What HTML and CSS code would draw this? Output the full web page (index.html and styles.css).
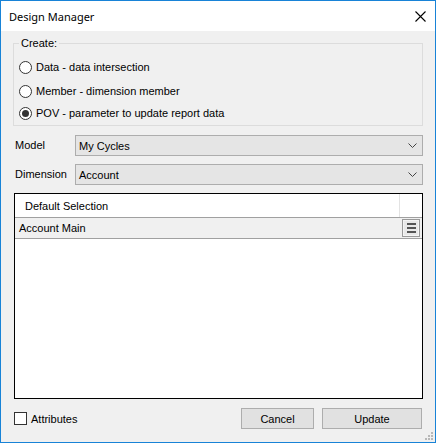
FILE: index.html
```html
<!DOCTYPE html>
<html>
<head>
<meta charset="utf-8">
<link rel="stylesheet" href="styles.css">
</head>
<body>
<div class="window">
  <div class="titlebar">
    <span class="title">Design Manager</span>
    <svg class="close" width="11" height="11" viewBox="0 0 11 11"><path d="M0.5 0.5 L10.5 10.5 M10.5 0.5 L0.5 10.5" stroke="#000" stroke-width="1.1" fill="none"/></svg>
  </div>
  <div class="content">
    <fieldset class="group">
      <legend>Create:</legend>
      <div class="radio-row"><span class="radio"></span><span>Data - data intersection</span></div>
      <div class="radio-row gap"><span class="radio"></span><span>Member - dimension member</span></div>
      <div class="radio-row"><span class="radio checked"></span><span>POV - parameter to update report data</span></div>
    </fieldset>
    <div class="field-row first">
      <span class="label">Model</span>
      <div class="combo"><span>My Cycles</span><svg width="9" height="6" viewBox="0 0 9 6"><path d="M0.5 0.5 L4.5 4.5 L8.5 0.5" stroke="#444" fill="none"/></svg></div>
    </div>
    <div class="field-row">
      <span class="label">Dimension</span>
      <div class="combo"><span>Account</span><svg width="9" height="6" viewBox="0 0 9 6"><path d="M0.5 0.5 L4.5 4.5 L8.5 0.5" stroke="#444" fill="none"/></svg></div>
    </div>
    <div class="grid">
      <div class="grid-head">
        <div class="head-cell">Default Selection</div>
        <div class="head-extra"></div>
      </div>
      <div class="grid-row">
        <span>Account Main</span>
        <div class="menu-btn"><svg width="9" height="10" viewBox="0 0 9 10"><rect x="0" y="0" width="9" height="2" fill="#555"/><rect x="0" y="4" width="9" height="2" fill="#555"/><rect x="0" y="8" width="9" height="2" fill="#555"/></svg></div>
      </div>
    </div>
    <div class="footer">
      <label class="check"><span class="box"></span><span>Attributes</span></label>
      <div class="buttons">
        <div class="btn cancel">Cancel</div>
        <div class="btn update">Update</div>
      </div>
    </div>
  </div>
  <svg class="grip" width="10" height="10" viewBox="0 0 10 10">
    <rect x="7" y="1" width="2" height="2" fill="#b8b8b8"/>
    <rect x="4" y="4" width="2" height="2" fill="#b8b8b8"/>
    <rect x="7" y="4" width="2" height="2" fill="#b8b8b8"/>
    <rect x="1" y="7" width="2" height="2" fill="#b8b8b8"/>
    <rect x="4" y="7" width="2" height="2" fill="#b8b8b8"/>
    <rect x="7" y="7" width="2" height="2" fill="#b8b8b8"/>
  </svg>
</div>
</body>
</html>
```
FILE: styles.css
```css
* { box-sizing: border-box; }
html, body { margin: 0; padding: 0; background: #fff; }
body { font-family: "Liberation Sans", Arial, sans-serif; font-size: 11px; color: #000; }

.window {
  position: relative;
  width: 436px;
  height: 443px;
  border: 1px solid #1883d7;
  background: #f0f0f0;
  display: flex;
  flex-direction: column;
}

.titlebar {
  height: 30px;
  background: #fff;
  display: flex;
  align-items: center;
  justify-content: space-between;
  padding-left: 8px;
  padding-right: 9px;
  flex: none;
}
.title { font-family: "Noto Sans", "Open Sans", sans-serif; font-size: 11px; color: #000; }
.close { display: block; margin-top: 0; }

.content {
  flex: 1;
  display: flex;
  flex-direction: column;
  padding: 6px 12px 13px 12px;
}

.group {
  margin: 0;
  padding: 6px 5px 1px 5px;
  border: 1px solid #dcdcdc;
  height: 89px;
  min-width: 0;
}
.group legend {
  padding: 0 2px;
  line-height: 13px;
  font-size: 11px;
}
.radio-row {
  height: 22px;
  display: flex;
  align-items: center;
}
.radio-row.gap { margin-top: 2px; }
.radio {
  width: 13px;
  height: 13px;
  border: 1px solid #333;
  border-radius: 50%;
  background: #fff;
  margin-right: 4px;
  display: flex;
  align-items: center;
  justify-content: center;
  flex: none;
}
.radio.checked::after {
  content: "";
  width: 7px;
  height: 7px;
  border-radius: 50%;
  background: #333;
}

.field-row {
  display: flex;
  align-items: center;
  height: 21px;
  margin-top: 8px;
}
.field-row.first { margin-top: 9px; }
.label { width: 62px; padding-left: 2px; margin-top: -2px; flex: none; }
.combo {
  width: 348px;
  height: 21px;
  background: #e5e5e5;
  border: 1px solid #adadad;
  display: flex;
  align-items: center;
  justify-content: space-between;
  padding: 0 5px 0 3px;
}

.grid {
  margin-top: 8px;
  margin-left: 1px;
  width: 409px;
  height: 206px;
  border: 1px solid #000;
  background: #fff;
  display: flex;
  flex-direction: column;
}
.grid-head {
  height: 24px;
  display: flex;
  border-bottom: 1px solid #a0a0a0;
  flex: none;
}
.head-cell {
  flex: 1;
  padding-left: 10px;
  display: flex;
  align-items: center;
  border-right: 1px solid #e3e3e3;
}
.head-extra { width: 22px; }
.grid-row {
  height: 21px;
  background: #f0f0f0;
  border-bottom: 1px solid #a0a0a0;
  display: flex;
  align-items: center;
  justify-content: space-between;
  padding: 0 2px 0 4px;
  flex: none;
}
.menu-btn {
  width: 18px;
  height: 18px;
  border: 1px solid #999;
  background: #e8e8e8;
  box-shadow: inset 0 0 0 1px #f4f4f4;
  display: flex;
  align-items: center;
  justify-content: center;
}
.menu-btn svg { display: block; }

.footer {
  margin-top: 9px;
  height: 21px;
  display: flex;
  align-items: center;
  justify-content: space-between;
  flex: none;
}
.check { display: flex; align-items: center; margin-left: 1px; }
.box {
  width: 13px;
  height: 13px;
  border: 1px solid #333;
  background: #fff;
  margin-right: 4px;
}
.buttons { display: flex; gap: 8px; margin-right: 1px; }
.btn {
  height: 21px;
  background: #e1e1e1;
  border: 1px solid #adadad;
  display: flex;
  align-items: center;
  justify-content: center;
}
.cancel { width: 73px; }
.update { width: 100px; }

.grip { position: absolute; right: 1px; bottom: 1px; }
```
